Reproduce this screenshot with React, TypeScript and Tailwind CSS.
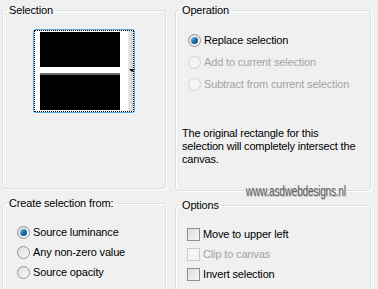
import React from "react";

const font = { fontFamily: '"Liberation Sans", Arial, sans-serif' };

const Group = ({ title, className, children }: { title: string; className: string; children?: React.ReactNode }) => (
  <fieldset className={`rounded-[3px] border border-[#d9e0e4] shadow-[inset_1px_1px_0_#fff,1px_1px_0_#fff] ${className}`}>
    <legend className="ml-[4px] px-[2px] text-[11px] leading-[13px] tracking-[-0.15px] text-black">{title}</legend>
    {children}
  </fieldset>
);

const Radio = ({ label, checked, disabled }: { label: string; checked?: boolean; disabled?: boolean }) => (
  <div className="flex h-[13px] items-center">
    <span
      className={`flex h-[13px] w-[13px] items-center justify-center rounded-full border ${
        disabled ? "border-[#d0d0d0] bg-[#f4f4f4]" : "border-[#939393] bg-gradient-to-br from-[#dcdcdc] to-[#fbfbfb]"
      }`}
    >
      {checked && <span className="h-[7px] w-[7px] rounded-full bg-gradient-to-br from-[#8ad0f6] via-[#1f6fa8] to-[#0e4c80]" />}
    </span>
    <span className={`ml-[3px] text-[11px] tracking-[-0.15px] ${disabled ? "text-[#a3a3a3]" : "text-black"}`}>{label}</span>
  </div>
);

const Check = ({ label, disabled }: { label: string; disabled?: boolean }) => (
  <div className="flex h-[13px] items-center">
    <span
      className={`h-[13px] w-[13px] border ${
        disabled ? "border-[#cacaca] bg-[#f4f4f4]" : "border-[#8e8f8f] bg-gradient-to-br from-[#dcdcdc] to-[#f8f8f8]"
      }`}
    />
    <span className={`ml-[3px] text-[11px] tracking-[-0.15px] ${disabled ? "text-[#a3a3a3]" : "text-black"}`}>{label}</span>
  </div>
);

export default function App() {
  return (
    <div className="h-[289px] w-[378px] overflow-hidden bg-[#f0f0f0]" style={font}>
      <div className="flex gap-[9px] pl-[2px] pt-[4px]">
        <div className="flex w-[164px] flex-col gap-[8px]">
          <Group title="Selection" className="h-[185px]">
            <div className="mt-[12px] flex justify-center">
              <div className="h-[84px] w-[102px] rounded-[3px] border border-[#5aa7d3] bg-white">
                <div className="flex h-full border border-dotted border-black bg-white">
                  <div className="flex w-[85px] flex-col py-[1px] pl-[5px]">
                    <div className="h-[35px] bg-black" />
                    <div className="h-[8px] border-b-2 border-[#6b6b6b] bg-white" />
                    <div className="h-[35px] bg-black" />
                  </div>
                  <div className="w-[8px] bg-white" />
                  <div className="relative flex-1 bg-gradient-to-r from-[#e8e8e8] to-[#d0d0d0]">
                    <span className="absolute left-[1px] top-[38px] h-0 w-0 border-x-[3px] border-t-[3px] border-x-transparent border-t-black" />
                  </div>
                </div>
              </div>
            </div>
          </Group>
          <Group title="Create selection from:" className="h-[100px]">
            <div className="ml-[14px] mt-[16px] flex flex-col gap-[7px]">
              <Radio label="Source luminance" checked />
              <Radio label="Any non-zero value" />
              <Radio label="Source opacity" />
            </div>
          </Group>
        </div>
        <div className="flex w-[196px] flex-col gap-[8px]">
          <Group title="Operation" className="h-[187px]">
            <div className="ml-[12px] mt-[17px] flex flex-col gap-[9px]">
              <Radio label="Replace selection" checked />
              <Radio label="Add to current selection" disabled />
              <Radio label="Subtract from current selection" disabled />
            </div>
            <p className="ml-[6px] mt-[36px] text-[11px] leading-[13px] tracking-[-0.18px] text-black">
              The original rectangle for this
              <br />
              selection will completely intersect the
              <br />
              canvas.
            </p>
          </Group>
          <div className="relative">
            <span
              className="absolute right-[25px] top-[-16px] origin-right scale-x-[0.72] whitespace-nowrap text-[14px] leading-[16px] tracking-[-0.3px] text-[#5e5e5e] [text-shadow:1px_1px_0_#c4c4c4]"
              style={{ fontFamily: '"Liberation Sans", Arial, sans-serif' }}
            >
              www.asdwebdesigns.nl
            </span>
            <Group title="Options" className="h-[100px]">
              <div className="ml-[11px] mt-[16px] flex flex-col gap-[7px]">
                <Check label="Move to upper left" />
                <Check label="Clip to canvas" disabled />
                <Check label="Invert selection" />
              </div>
            </Group>
          </div>
        </div>
      </div>
    </div>
  );
}
